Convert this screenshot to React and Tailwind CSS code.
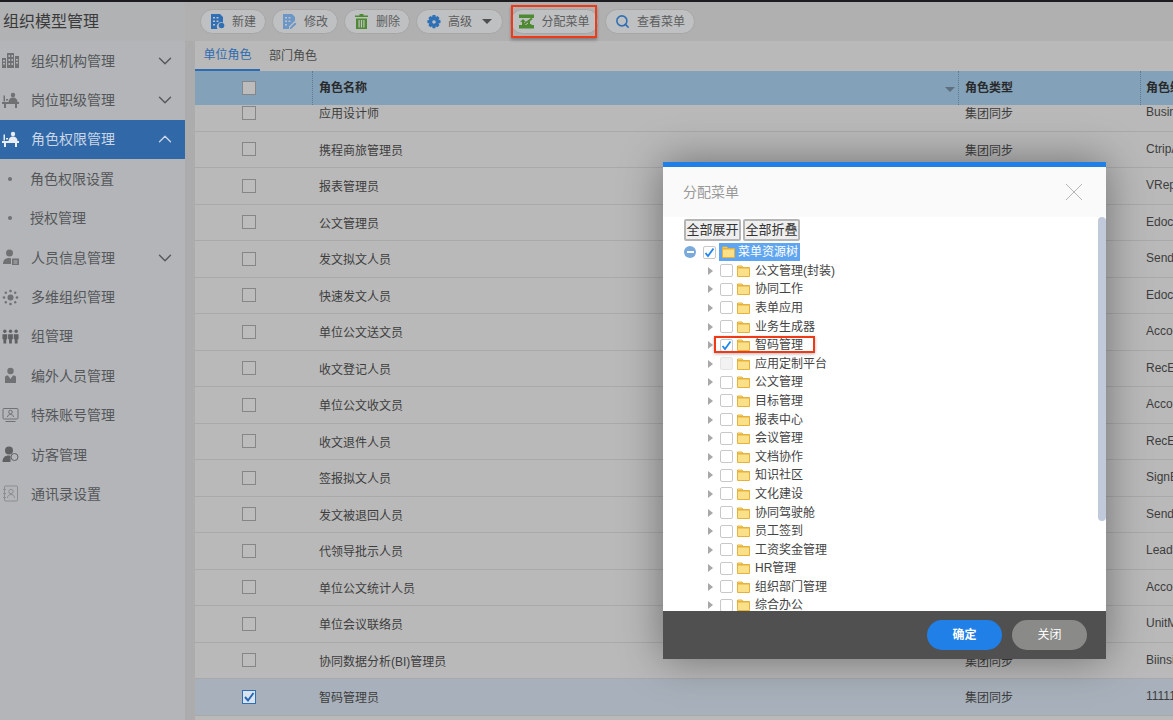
import { ChevronDown, ChevronUp, Search } from "lucide-react";

const FONT = "[font-family:'Liberation_Sans','Noto_Sans_CJK_SC',sans-serif]";

const IconBuilding = () => (
  <svg width="17" height="17" viewBox="0 0 17 17" fill="#6f7173">
    <rect x="0" y="6" width="4" height="10" />
    <rect x="5" y="1" width="7" height="15" />
    <rect x="13" y="4" width="4" height="12" />
    <path d="M6.5 3h1.5v2H6.5zM9.5 3H11v2H9.5zM6.5 7h1.5v2H6.5zM9.5 7H11v2H9.5zM6.5 11h1.5v2H6.5zM9.5 11H11v2H9.5zM1 8h2v1.500H1zM1 11h2v1.500H1zM14 7h2v1.500h-2zM14 10h2v1.500h-2z" fill="#b3b5b8" />
  </svg>
);

const IconSeat = ({ color = "#6f7173" }) => (
  <svg width="17" height="17" viewBox="0 0 17 17" fill={color}>
    <circle cx="11" cy="3" r="2.200" />
    <path d="M6.500 10c0-3 2-4.500 4.500-4.500s4.500 1.500 4.500 4.500z" />
    <rect x="0" y="10" width="17" height="2" />
    <rect x="2" y="12" width="2" height="4" />
    <rect x="13" y="12" width="2" height="4" />
    <path d="M1.500 3.500v6h1.500v-6zM4 7h2v1.500H4z" />
  </svg>
);

const IconPerson = () => (
  <svg width="17" height="17" viewBox="0 0 17 17" fill="#6f7173">
    <circle cx="7.500" cy="4" r="3.500" />
    <path d="M1 15c0-4 2.500-6 6-6 1 0 1.500.2 2 .4V15z" />
    <rect x="10" y="9.500" width="7" height="6.500" rx="0.500" />
    <path d="M11.500 11.500h4v1h-4zM11.500 13.500h4v1h-4z" fill="#b3b5b8" />
  </svg>
);

const IconMatrix = () => (
  <svg width="17" height="17" viewBox="0 0 17 17" fill="#6f7173">
    <circle cx="8.500" cy="8.500" r="3" />
    <circle cx="8.500" cy="2" r="1.300" />
    <circle cx="8.500" cy="15" r="1.300" />
    <circle cx="2" cy="8.500" r="1.300" />
    <circle cx="15" cy="8.500" r="1.300" />
    <circle cx="3.800" cy="3.800" r="1.200" />
    <circle cx="13.200" cy="3.800" r="1.200" />
    <circle cx="3.800" cy="13.200" r="1.200" />
    <circle cx="13.200" cy="13.200" r="1.200" />
  </svg>
);

const IconGroup = () => (
  <svg width="18" height="17" viewBox="0 0 18 17" fill="#5f6163">
    <circle cx="3" cy="3" r="1.800" />
    <circle cx="9" cy="3" r="1.800" />
    <circle cx="15" cy="3" r="1.800" />
    <path d="M0.500 6h5v5.500H4.500V16h-3v-4.500H0.500zM6.500 6h5v5.500h-1V16h-3v-4.500h-1zM12.500 6h5v5.500h-1V16h-3v-4.500h-1z" />
  </svg>
);

const IconSuit = () => (
  <svg width="17" height="17" viewBox="0 0 17 17" fill="#6f7173">
    <circle cx="8.500" cy="4" r="3.200" />
    <path d="M3 16V10.500C3 9 4 8.500 6 8.500L8.500 12 11 8.500c2 0 3 .5 3 2V16z" />
  </svg>
);

const IconScreen = () => (
  <svg width="17" height="17" viewBox="0 0 17 17" fill="none" stroke="#6f7173">
    <rect x="1" y="1.500" width="15" height="10.500" rx="1" />
    <circle cx="8.500" cy="5" r="1.800" />
    <path d="M5.500 10c0-1.500 1.200-2.500 3-2.500s3 1 3 2.500M3.500 14.500h10" />
  </svg>
);

const IconVisitor = () => (
  <svg width="17" height="17" viewBox="0 0 17 17" fill="#5f6163">
    <circle cx="7" cy="4.500" r="4" />
    <path d="M0.500 16c0-4.500 2.500-6.500 6-6.500 1 0 1.500.1 2 .3V16z" />
    <circle cx="12.500" cy="11" r="3.500" fill="#b3b5b8" stroke="#5f6163" />
  </svg>
);

const IconContacts = () => (
  <svg width="17" height="17" viewBox="0 0 17 17" fill="none" stroke="#8b8d8f">
    <rect x="2.500" y="1" width="13" height="15" rx="1" />
    <circle cx="9" cy="6.500" r="2.200" />
    <path d="M5.500 13c0-2.300 1.500-3.500 3.500-3.500s3.500 1.200 3.500 3.500M1 4.500h3M1 8.500h3M1 12.500h3" />
  </svg>
);

const NAV = [
  { label: "组织机构管理", icon: <IconBuilding />, arrow: "down" },
  { label: "岗位职级管理", icon: <IconSeat />, arrow: "down" },
  { label: "角色权限管理", icon: <IconSeat color="#e8edf3" />, arrow: "up", active: true },
  { label: "角色权限设置", sub: true },
  { label: "授权管理", sub: true },
  { label: "人员信息管理", icon: <IconPerson />, arrow: "down" },
  { label: "多维组织管理", icon: <IconMatrix /> },
  { label: "组管理", icon: <IconGroup /> },
  { label: "编外人员管理", icon: <IconSuit /> },
  { label: "特殊账号管理", icon: <IconScreen /> },
  { label: "访客管理", icon: <IconVisitor /> },
  { label: "通讯录设置", icon: <IconContacts /> },
];

const ROWS = [
  ["应用设计师", "集团同步", "BusinessDesigner"],
  ["携程商旅管理员", "集团同步", "CtripAdmin"],
  ["报表管理员", "集团同步", "VReportAdmin"],
  ["公文管理员", "集团同步", "EdocAdmin"],
  ["发文拟文人员", "集团同步", "SendEdoc"],
  ["快速发文人员", "集团同步", "EdocQuick"],
  ["单位公文送文员", "集团同步", "AccountEdoc"],
  ["收文登记人员", "集团同步", "RecEdoc"],
  ["单位公文收文员", "集团同步", "AccountRec"],
  ["收文退件人员", "集团同步", "RecEdocBack"],
  ["签报拟文人员", "集团同步", "SignEdoc"],
  ["发文被退回人员", "集团同步", "SendBack"],
  ["代领导批示人员", "集团同步", "LeaderAgent"],
  ["单位公文统计人员", "集团同步", "AccountStat"],
  ["单位会议联络员", "集团同步", "UnitMeeting"],
  ["协同数据分析(BI)管理员", "集团同步", "BiinsightAdmin"],
  ["智码管理员", "集团同步", "11111", true],
];

const TREE = [
  "公文管理(封装)", "协同工作", "表单应用", "业务生成器", "智码管理", "应用定制平台",
  "公文管理", "目标管理", "报表中心", "会议管理", "文档协作", "知识社区", "文化建设",
  "协同驾驶舱", "员工签到", "工资奖金管理", "HR管理", "组织部门管理", "综合办公",
];

const IconDocBlue = ({ color }) => (
  <svg width="15" height="15" viewBox="0 0 15 15" fill={color}>
    <path d="M1 0h9l3 3v5.500A4.500 4.500 0 0 0 7.500 15H1z" />
    <path d="M3 3h2v1.500H3zM6.500 3h2v1.500h-2zM3 6.500h2V8H3zM6.500 6.500h2V8h-2zM3 10h2v1.500H3z" fill="#c0c2c4" />
    <circle cx="11.500" cy="11.500" r="2.800" />
  </svg>
);

const IconEdit = () => (
  <svg width="15" height="15" viewBox="0 0 15 15" fill="#6a96c8">
    <path d="M1 0h9l3 3v3.500L7 12.500V15H1z" />
    <path d="M3 3h2v1.500H3zM6.500 3h2v1.500h-2zM3 6.500h2V8H3zM6.500 6.500h2V8h-2zM3 10h2v1.500H3z" fill="#c0c2c4" />
    <path d="M9 15l-1 0 0-1.500L13 8.500l1.500 1.500z" />
  </svg>
);

const IconTrash = () => (
  <svg width="15" height="15" viewBox="0 0 15 15" fill="#4e8a32">
    <path d="M5.500 0h4v1.500H14V3H1V1.500h4.500z" />
    <path d="M2 4.500h11V15H2z" />
    <path d="M4.500 6h1.200v7.500H4.500zM6.900 6h1.200v7.500H6.900zM9.300 6h1.200v7.500H9.300z" fill="#c0c2c4" />
  </svg>
);

const IconGear = () => (
  <svg width="14" height="14" viewBox="0 0 14 14" fill="#2f6fb5">
    <path fillRule="evenodd" d="M5.600 0h2.800l.4 2 1.700-.9 2 2-1 1.700 2 .5v2.800l-2 .4.900 1.700-2 2-1.700-1-.4 2H5.600l-.5-2-1.700 1-2-2 1-1.700-2-.4V5.300l2-.5-1-1.700 2-2 1.700 1zM7 5.200a1.800 1.800 0 1 0 0 3.600 1.800 1.800 0 0 0 0-3.600z" />
  </svg>
);

const IconAssign = () => (
  <svg width="15" height="15" viewBox="0 0 15 15">
    <rect x="0" y="0.500" width="15" height="3.500" fill="#4e8a32" />
    <rect x="0" y="11" width="15" height="3.500" fill="#4e8a32" />
    <path d="M13 4.500 4 11" stroke="#4e8a32" strokeWidth="2" />
    <path d="M1 8l3-3 3 3H5v3H3V8zM9 7h2v3h2l-3 2.500L7 10h2z" fill="#4e8a32" />
  </svg>
);

const FolderIcon = ({ open }) => (
  <svg width={open ? 15 : 13} height="12" viewBox="0 0 13 12" className="shrink-0">
    <path d="M0.500 1h4.500l1 1.500h6.500V11.500H0.500z" fill="#fbe08a" stroke="#e6b23c" />
    <rect x="0.500" y="2" width="12" height="1.500" fill="#e6b23c" />
  </svg>
);

function NavItem({ item }) {
  if (item.sub) {
    return (
      <div className="h-[39.4px] flex items-center pl-[8px] text-sm text-[#55575a]">
        <span className="w-[4px] h-[4px] rounded-full bg-[#6f7173] mr-[18px]" />
        {item.label}
      </div>
    );
  }
  return (
    <div className={`h-[39.4px] flex items-center pl-[2px] text-sm ${item.active ? "bg-[#3068a8] text-[#c9d6e6]" : "text-[#55575a]"}`}>
      <span className="w-[17px] flex justify-center">{item.icon}</span>
      <span className="ml-[12px] flex-1">{item.label}</span>
      {item.arrow === "down" && <ChevronDown size={22} strokeWidth={1.500} className="mr-[9px] text-[#55575a]" />}
      {item.arrow === "up" && <ChevronUp size={22} strokeWidth={1.500} className="mr-[9px] text-[#c9d6e6]" />}
    </div>
  );
}

function ToolButton({ icon, label, width, caret, marked }) {
  return (
    <div className={`relative h-[25px] ${width} flex items-center justify-center gap-[7px] rounded-full border border-[#a6a6a6] bg-[#bfc0c1] text-xs text-[#5c5d5e]`}>
      {icon}
      <span>{label}</span>
      {caret && <span className="ml-[3px] w-0 h-0 border-x-[5px] border-x-transparent border-t-[5px] border-t-[#4e4e4e]" />}
      {marked && <span className="absolute left-0 -top-[5px] w-[86px] h-[33px] border-2 border-[#f03a17] shadow-[0_2px_3px_rgba(0,0,0,0.3)]" />}
    </div>
  );
}

function RowCheck({ checked }) {
  return (
    <span className={`w-[14px] h-[14px] border flex items-center justify-center ${checked ? "border-[#2f6fb5] bg-[#dbe3ec]" : "border-[#868686] bg-[#bcbcbc]"}`}>
      {checked && (
        <svg width="12" height="12" viewBox="0 0 12 12" fill="none" stroke="#2468b8" strokeWidth="2">
          <path d="M2 6l3 3.500L10.500 2" />
        </svg>
      )}
    </span>
  );
}

function TreeCheck({ checked, faded }) {
  return (
    <span className={`w-[13px] h-[13px] shrink-0 border rounded-[2px] flex items-center justify-center ${faded ? "border-[#e4e4e4] bg-[#f2f2f2]" : "border-[#c8c8c8] bg-white"}`}>
      {checked && (
        <svg width="11" height="11" viewBox="0 0 11 11" fill="none" stroke="#1f86ee" strokeWidth="1.800">
          <path d="M1.500 6l2.500 3L9.500 1.500" />
        </svg>
      )}
    </span>
  );
}

function TreeRow({ label }) {
  const marked = label === "智码管理";
  return (
    <div className="relative h-[18.6px] flex items-center pl-[45px] text-xs text-[#444]">
      <span className="w-0 h-0 border-y-[4px] border-y-transparent border-l-[5px] border-l-[#a8a8a8] mr-[7px]" />
      <TreeCheck checked={marked} faded={label === "应用定制平台"} />
      <span className="ml-[4px]"><FolderIcon /></span>
      <span className="ml-[5px] whitespace-nowrap">{label}</span>
      {marked && <span className="absolute left-[51px] top-[0px] w-[101px] h-[17px] border-2 border-[#f03a17] shadow-[0_1px_3px_rgba(0,0,0,0.3)]" />}
    </div>
  );
}

function Dialog() {
  return (
    <div className="absolute left-[663px] top-[162px] w-[443px] h-[497px] flex flex-col bg-white border-t-[5px] border-t-[#2080e8] shadow-[0_0_40px_rgba(0,0,0,0.4)]">
      <div className="h-[50px] shrink-0 bg-[#fafafa] flex items-center justify-between pl-[20px] pr-[23px] text-sm text-[#999]">
        <span>分配菜单</span>
        <svg width="18" height="18" viewBox="0 0 18 18" stroke="#b5b5b5" strokeWidth="1">
          <path d="M1 1l16 16M17 1L1 17" />
        </svg>
      </div>
      <div className="relative flex-1 min-h-0 overflow-hidden">
        <div className="flex pl-[21px] pt-[2px] gap-[2px]">
          {["全部展开", "全部折叠"].map((t) => (
            <span key={t} className="w-[57px] h-[22px] flex items-center justify-center rounded-[2px] border-2 border-[#b5b5b5] bg-[#efefef] text-[13px] text-[#333]">{t}</span>
          ))}
        </div>
        <div className="h-[18px] flex items-center pl-[21px] mt-[2px]">
          <span className="w-[12px] h-[12px] rounded-full bg-[#7aa9dc] flex items-center justify-center">
            <span className="w-[7px] h-[2px] bg-white" />
          </span>
          <span className="ml-[7px]"><TreeCheck checked /></span>
          <span className="ml-[3px] h-[18px] flex items-center bg-[#60a5f0] pl-[2px] pr-[2px] text-xs text-white">
            <FolderIcon open />
            <span className="ml-[2px]">菜单资源树</span>
          </span>
        </div>
        <div className="mt-[0.5px]">
          {TREE.map((t) => <TreeRow key={t} label={t} />)}
        </div>
        <div className="absolute right-0 top-0 w-[8px] h-[304px] rounded-[4px] bg-[#c0cadb]" />
      </div>
      <div className="h-[48px] shrink-0 bg-[#505050] flex items-center justify-end pr-[19px] gap-[10px] text-xs text-white">
        <span className="w-[75px] h-[30px] rounded-full bg-[#2080e8] flex items-center justify-center font-bold">确定</span>
        <span className="w-[75px] h-[30px] rounded-full bg-[#8a8a88] flex items-center justify-center">关闭</span>
      </div>
    </div>
  );
}

export default function App() {
  return (
    <div className={`relative w-[1173px] h-[720px] overflow-hidden bg-[#acacac] ${FONT}`}>
      <div className="h-[2px] bg-[#1c1c20]" />
      <div className="flex h-[718px]">
        <aside className="w-[185px] shrink-0 bg-[#b3b5b8]">
          <div className="h-[39px] flex items-center pl-[3px] text-base text-[#3a3a3a] bg-[#b0b2b4]">组织模型管理</div>
          {NAV.map((item) => <NavItem key={item.label} item={item} />)}
        </aside>
        <main className="flex-1 min-w-0 ml-[10px] -mr-px bg-[#b9b9b9] flex flex-col">
          <div className="h-[39px] shrink-0 -ml-[10px] pl-[15px] bg-[#b0b0b0] flex items-center gap-[6px]">
            <ToolButton icon={<IconDocBlue color="#2f6fb5" />} label="新建" width="w-[66px]" />
            <ToolButton icon={<IconEdit />} label="修改" width="w-[66px]" />
            <ToolButton icon={<IconTrash />} label="删除" width="w-[66px]" />
            <ToolButton icon={<IconGear />} label="高级" width="w-[87px]" caret />
            <span className="-ml-[5px]" />
            <ToolButton icon={<IconAssign />} label="分配菜单" width="w-[89px]" marked />
            <ToolButton icon={<Search size={15} strokeWidth={2.500} color="#2f6fb5" />} label="查看菜单" width="w-[90px]" />
          </div>
          <div className="h-[30px] shrink-0 flex text-xs">
            <span className="w-[65px] flex items-center justify-center text-[#2e6bb0] border-b-2 border-[#2e6bb0]">单位角色</span>
            <span className="ml-[9px] flex items-center text-[#4a4a4a]">部门角色</span>
          </div>
          <div className="h-[34px] shrink-0 grid grid-cols-[117px_646px_182px_1fr] bg-[#83a1b8] text-xs font-bold text-[#2a2a2a]">
            <div className="flex items-center justify-center pr-[9px]"><RowCheck /></div>
            <div className="relative flex items-center pl-[6px] border-l border-dotted border-[#5d7a90]">
              角色名称
              <span className="absolute right-[3px] top-[16px] w-0 h-0 border-x-[5px] border-x-transparent border-t-[5px] border-t-[#5e6f80]" />
            </div>
            <div className="flex items-center pl-[6px] border-l border-dotted border-[#5d7a90]">角色类型</div>
            <div className="flex items-center pl-[5px] whitespace-nowrap overflow-hidden border-l border-dotted border-[#5d7a90]">角色编码</div>
          </div>
          <div className="flex-1 min-h-0 overflow-hidden">
            <div className="-mt-[10px]">
              {ROWS.map(([name, type, code, selected]) => (
                <div key={name} className={`h-[36.5px] grid grid-cols-[117px_646px_182px_1fr] items-center border-b border-[#a9a9a9] text-xs text-[#3d3d3d] ${selected ? "bg-[#a8b1bb]" : ""}`}>
                  <div className="flex justify-center pr-[9px]"><RowCheck checked={selected} /></div>
                  <div className="pl-[7px] pt-[3px]">{name}</div>
                  <div className="pl-[7px] pt-[3px]">{type}</div>
                  <div className="pl-[6px] pb-[1px] whitespace-nowrap overflow-hidden">{code}</div>
                </div>
              ))}
            </div>
          </div>
        </main>
      </div>
      <Dialog />
    </div>
  );
}
